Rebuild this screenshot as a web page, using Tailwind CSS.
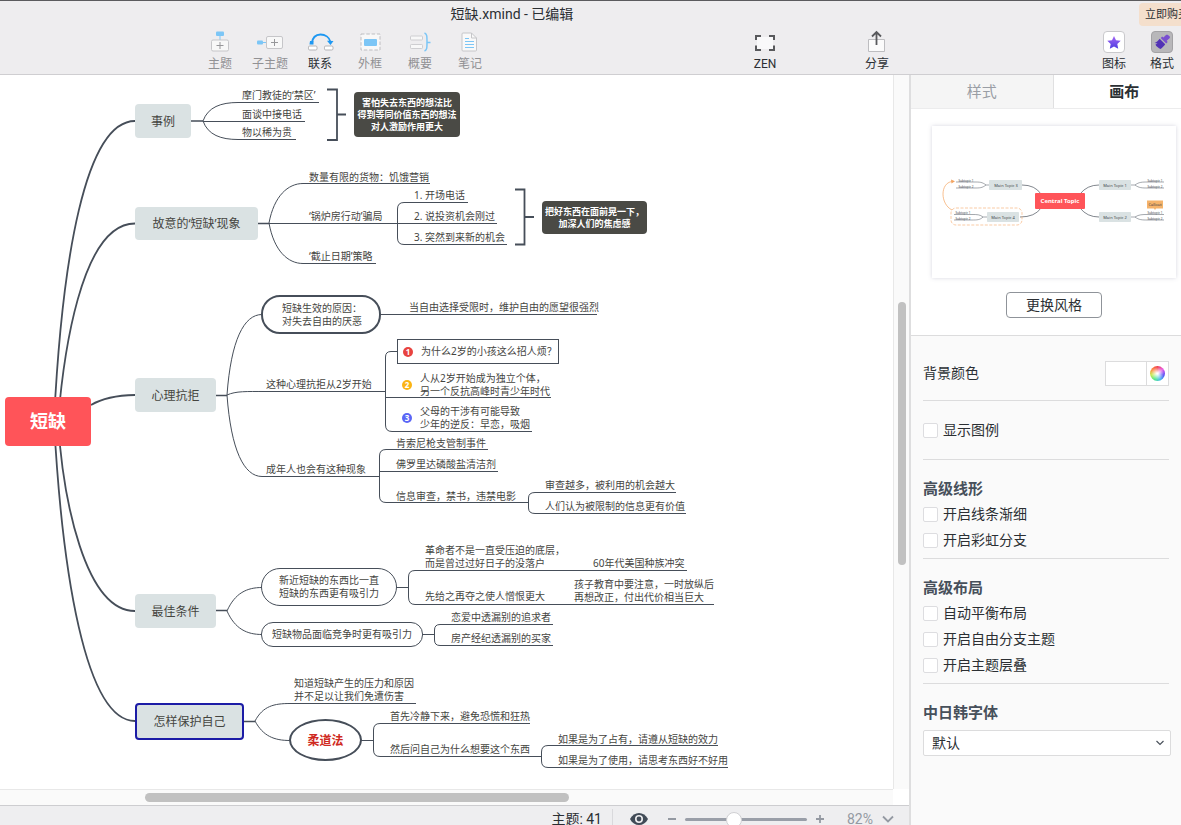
<!DOCTYPE html>
<html lang="zh-CN">
<head>
<meta charset="utf-8">
<meta name="viewport" content="width=device-width, initial-scale=1">
<title>短缺.xmind</title>
<script src="https://cdn.jsdelivr.net/npm/@tailwindcss/browser@4"></script>
</head>
<body class="h-screen flex flex-col overflow-hidden bg-white text-[#2b2f33] font-['Roboto','Noto_Sans_CJK_SC',sans-serif]">

<header class="shrink-0 bg-[#eeedef] border-t border-t-[#5b5b5e] border-b border-b-[#cfced1]">
  <div class="flex h-[27px] overflow-hidden">
    <h1 class="flex-1 pr-[115px] text-center text-[14px] leading-[26px]">短缺.xmind - 已编辑</h1>
    <button class="mt-0.5 -mr-4 h-[23px] w-[58px] shrink-0 rounded bg-[#f4dfcc] pl-1.5 text-left text-[11px] leading-[22px] whitespace-nowrap">立即购买</button>
  </div>
  <nav class="flex h-[46px] pl-[195px] text-[12px] leading-4 overflow-hidden" aria-label="工具栏">
    <button class="flex w-[50px] shrink-0 flex-col items-center text-[#919194]">
      <svg class="h-7 w-7" viewBox="0 0 28 28" fill="none"><rect x="10" y="3.500" width="8" height="4.500" rx="1" fill="#7cc6f6"/><path d="M14 8v4" stroke="#7cc6f6"/><rect x="5.500" y="12" width="17" height="11" rx="1.500" fill="#f8f8f8" stroke="#c6c6c9"/><path d="M10.500 17.500h7M14 14v7" stroke="#97979a"/></svg>
      <span>主题</span>
    </button>
    <button class="flex w-[50px] shrink-0 flex-col items-center text-[#919194]">
      <svg class="h-7 w-7" viewBox="0 0 28 28" fill="none"><rect x="1" y="12.500" width="6" height="4" rx="1" fill="#7cc6f6"/><path d="M7 14.500h3" stroke="#7cc6f6"/><rect x="10.500" y="8.500" width="16" height="12" rx="1.500" fill="#f8f8f8" stroke="#c6c6c9"/><path d="M15 14.500h7M18.500 11v7" stroke="#97979a"/></svg>
      <span>子主题</span>
    </button>
    <button class="flex w-[50px] shrink-0 flex-col items-center">
      <svg class="h-7 w-7" viewBox="0 0 28 28" fill="none"><path d="M5.500 16C6.500 9 10 6.500 14.500 6.500S23.500 9 24.500 14" stroke="#1e98f2" stroke-width="1.800"/><path d="M21 12.800l6.500 .2-3 4z" fill="#1e98f2"/><path d="M4 13h3.500v3.500H3.500z" fill="#1e98f2"/><rect x="2.500" y="18" width="8.500" height="4" rx="1.200" fill="#fff" stroke="#b4b4b7"/><rect x="18.500" y="18" width="8.500" height="4" rx="1.200" fill="#fff" stroke="#b4b4b7"/></svg>
      <span>联系</span>
    </button>
    <button class="flex w-[50px] shrink-0 flex-col items-center text-[#919194]">
      <svg class="h-7 w-7" viewBox="0 0 28 28" fill="none"><rect x="5" y="6" width="19" height="16" fill="#f8f8f8" stroke="#bebec1" stroke-dasharray="3.500 1.800"/><rect x="8" y="11" width="13" height="7" rx="1" fill="#7cc6f6"/></svg>
      <span>外框</span>
    </button>
    <button class="flex w-[50px] shrink-0 flex-col items-center text-[#919194]">
      <svg class="h-7 w-7" viewBox="0 0 28 28" fill="none"><rect x="4.500" y="8" width="12" height="4" rx=".8" fill="#f8f8f8" stroke="#ceced1"/><rect x="4.500" y="16.500" width="12" height="4" rx=".8" fill="#f8f8f8" stroke="#ceced1"/><path d="M18.500 5c2.500 1 2.500 3 2.500 9s0 8-2.500 9M21 14.500h3.500" stroke="#7cc6f6" stroke-width="1.500"/></svg>
      <span>概要</span>
    </button>
    <button class="flex w-[50px] shrink-0 flex-col items-center text-[#919194]">
      <svg class="h-7 w-7" viewBox="0 0 28 28" fill="none"><path d="M7 5h8.500l5 5v12a1 1 0 0 1-1 1H7a1 1 0 0 1-1-1V6a1 1 0 0 1 1-1z" fill="#f9f9f9" stroke="#c6c6c9"/><path d="M15.500 5v5h5" stroke="#c6c6c9"/><path d="M9 10.500h4M9 13.500h9M9 16.500h9M9 19.500h9" stroke="#7cc6f6"/></svg>
      <span>笔记</span>
    </button>
    <button class="ml-[245px] flex w-[50px] shrink-0 flex-col items-center">
      <svg class="h-7 w-7" viewBox="0 0 28 28" fill="none"><rect x="6" y="9" width="16" height="12" fill="#f9f9fa"/><path d="M5 12V8h5M18 8h5v4M23 17.500V22h-5M10 22H5v-4.500" stroke="#58595c" stroke-width="2"/></svg>
      <span>ZEN</span>
    </button>
    <button class="ml-[62px] flex w-[50px] shrink-0 flex-col items-center">
      <svg class="h-7 w-7" viewBox="0 0 28 28" fill="none"><path d="M5.500 11.500h16v12h-16z" fill="#fbfbfb" stroke="#bdbdc0"/><path d="M13.500 17V4M9 8.500L13.500 4 18 8.500" stroke="#58595c" stroke-width="1.800"/></svg>
      <span>分享</span>
    </button>
    <button class="ml-auto flex w-12 shrink-0 flex-col items-center">
      <svg class="h-7 w-7" viewBox="0 0 28 28" fill="none"><defs><linearGradient id="violet" x2="0" y2="1"><stop stop-color="#a667f5"/><stop offset="1" stop-color="#4c3ce0"/></linearGradient></defs><rect x="3.500" y="3.500" width="21" height="21" rx="3.500" fill="#fff" stroke="#c9c9cc"/><path d="M14 8l2 4.200 4.700.6-3.400 3.200.9 4.700-4.200-2.300-4.200 2.300.9-4.700-3.400-3.200 4.700-.6z" fill="url(#violet)"/></svg>
      <span>图标</span>
    </button>
    <button class="-mr-[5px] flex w-12 shrink-0 flex-col items-center">
      <svg class="h-7 w-7" viewBox="0 0 28 28" fill="none"><rect x="3.500" y="3.500" width="21" height="21" rx="3.500" fill="#b8b7ba" stroke="#a3a2a5"/><path d="M21.500 8.200c.7.800.5 1.700-.2 2.300l-2.600 2.200 1 1.200-1.500 1.500-5.500-5.500 1.500-1.500 1.200 1 2.600-2.300c.9-.8 2.600.1 3.500 1.100z" fill="#7a4fd0"/><path d="M11.700 10.700l5.500 5.500c-1.500 2-2.700 3.400-4.700 4.700-1.500-.3-2.300-1-3-1.800-1-.6-1.700-1.400-2-2.500l2-1.200-3-.5c2.300-1 3.700-2.300 5.200-4.200z" fill="#5232b5"/></svg>
      <span>格式</span>
    </button>
  </nav>
</header>

<div class="flex min-h-0 flex-1">
  <main class="flex min-w-0 flex-1 flex-col">
    <div class="flex min-h-0 flex-1">
      <section class="relative min-w-0 flex-1 overflow-hidden bg-white font-['Noto_Sans','Noto_Sans_CJK_SC',sans-serif] text-[10px] leading-[13px] text-[#45453f]" aria-label="思维导图">
        <!-- branches, underlines and brackets -->
        <svg class="absolute left-0 top-0 h-[715px] w-[893px]" viewBox="0 75 893 715" fill="none" stroke="#464e59">
          <g stroke-width="1.800">
            <path d="M54 421C62 260 85 121 135 121"/>
            <path d="M58 421C63 360 80 223.500 135 223.500"/>
            <path d="M91 405Q107 395.500 135 395"/>
            <path d="M58 421C63 500 85 611 135 611"/>
            <path d="M54 421C62 570 85 721 135 721"/>
            <path d="M327 89.500H337V140H327M337 114.500H346"/>
            <path d="M515 189.500H524.500V244.500H515M524.500 217H534"/>
          </g>
          <path d="M191 121H203M258 223.500H269M216 395.500H227M216 610.500H227M243 721.500H255" stroke-width="1.400"/>
          <path d="M203 121C208 107 221 102.500 238 102.500H319M203 121.500H305M203 121C208 135 221 139.500 238 139.500H296"/>
          <path d="M269 223C274 196 288 183.500 303 183.500H430M269 223.500H497M269 223C274 251 288 263.500 303 263.500H376"/>
          <path d="M468 202.500H404Q397.500 202.500 397.500 209V238Q397.500 244.500 404 244.500H507"/>
          <path d="M227 395C231 340 244 314.500 262 314.500M227 395C236 391 246 391.500 266 391.500H385M227 395C231 450 244 476.500 262 476.500H380"/>
          <path d="M381 314.500H597"/>
          <path d="M397 351.500H391Q385.500 351.500 385.500 357V425Q385.500 431.500 392 431.500H532M385 397.500H551"/>
          <path d="M488 449.500H386Q379.500 449.500 379.500 456V496Q379.500 502.500 386 502.500H528M380 471.500H498"/>
          <path d="M676 492.500H535Q528.500 492.500 528.500 498V508Q528.500 513.500 535 513.500H686"/>
          <path d="M227 611C235 593 247 587.500 262 587.500M227 611C235 629 247 634.500 262 634.500"/>
          <path d="M396 587.500H408M687 570.500H415Q408.500 570.500 408.500 577V597Q408.500 604.500 415 604.500H714"/>
          <path d="M422 634.500H434M553 624.500H440Q434.500 624.500 434.500 630V640Q434.500 645.500 440 645.500H553"/>
          <path d="M255 721C263 706 274 703.500 290 703.500H416M255 721C263 736 274 740.500 290 740.500"/>
          <path d="M361 740.500H373M530 723.500H380Q373.500 723.500 373.500 730V750Q373.500 756.500 380 756.500H541"/>
          <path d="M718 745.500H548Q541.500 745.500 541.500 752V761Q541.500 767.500 548 767.500H728"/>
        </svg>

        <div class="absolute left-[5px] top-[322px] flex h-[49px] w-[86px] items-center justify-center rounded bg-[#ff5459] text-[18px] font-bold text-white">短缺</div>

        <div class="absolute left-[135px] top-[29px] flex h-[34px] w-[56px] items-center justify-center rounded bg-[#dae2e3] text-[12px]">事例</div>
        <p class="absolute left-[242px] top-[14px] whitespace-nowrap">摩门教徒的‘禁区’</p>
        <p class="absolute left-[242px] top-[33px] whitespace-nowrap">面谈中接电话</p>
        <p class="absolute left-[242px] top-[51px] whitespace-nowrap">物以稀为贵</p>
        <div class="absolute left-[354px] top-[17px] flex h-[45px] w-[106px] items-center justify-center rounded bg-[#4a4a45] text-center text-[9px] leading-3 font-bold whitespace-nowrap text-white">害怕失去东西的想法比<br>得到等同价值东西的想法<br>对人激励作用更大</div>

        <div class="absolute left-[135px] top-[132px] flex h-[33px] w-[123px] items-center justify-center rounded bg-[#dae2e3] text-[12px]">故意的‘短缺’现象</div>
        <p class="absolute left-[309px] top-[96px] whitespace-nowrap">数量有限的货物：饥饿营销</p>
        <p class="absolute left-[309px] top-[135px] whitespace-nowrap">‘锅炉房行动’骗局</p>
        <p class="absolute left-[309px] top-[175px] whitespace-nowrap">‘截止日期’策略</p>
        <p class="absolute left-[414px] top-[114px] whitespace-nowrap">1. 开场电话</p>
        <p class="absolute left-[414px] top-[135px] whitespace-nowrap">2. 说投资机会刚过</p>
        <p class="absolute left-[414px] top-[156px] whitespace-nowrap">3. 突然到来新的机会</p>
        <div class="absolute left-[542px] top-[126px] flex h-[33px] w-[105px] items-center justify-center rounded bg-[#4a4a45] text-center text-[9px] leading-3 font-bold whitespace-nowrap text-white">把好东西在面前晃一下，<br>加深人们的焦虑感</div>

        <div class="absolute left-[135px] top-[303px] flex h-[34px] w-[81px] items-center justify-center rounded bg-[#dae2e3] text-[12px]">心理抗拒</div>
        <div class="absolute left-[261px] top-[220px] flex h-[39px] w-[120px] items-center rounded-[19px] border-2 border-[#464e59] bg-white pl-[19px] whitespace-nowrap">短缺生效的原因：<br>对失去自由的厌恶</div>
        <p class="absolute left-[409px] top-[226px] whitespace-nowrap">当自由选择受限时，维护自由的愿望很强烈</p>
        <p class="absolute left-[266px] top-[303px] whitespace-nowrap">这种心理抗拒从2岁开始</p>
        <div class="absolute left-[397px] top-[264px] flex h-[25px] w-[162px] items-center gap-2 border border-[#464e59] bg-white pl-[5px] whitespace-nowrap"><b class="flex size-2.5 items-center justify-center rounded-full bg-[#e8433f] text-[8px] leading-none text-white">1</b>为什么2岁的小孩这么招人烦？</div>
        <div class="absolute left-[402px] top-[297px] flex items-center gap-2 whitespace-nowrap"><b class="flex size-2.5 items-center justify-center rounded-full bg-[#fbb414] text-[8px] leading-none text-white">2</b><p>人从2岁开始成为独立个体，<br>另一个反抗高峰时青少年时代</p></div>
        <div class="absolute left-[402px] top-[330px] flex items-center gap-2 whitespace-nowrap"><b class="flex size-2.5 items-center justify-center rounded-full bg-[#5b66f6] text-[8px] leading-none text-white">3</b><p>父母的干涉有可能导致<br>少年的逆反：早恋，吸烟</p></div>
        <p class="absolute left-[266px] top-[388px] whitespace-nowrap">成年人也会有这种现象</p>
        <p class="absolute left-[396px] top-[362px] whitespace-nowrap">肯索尼枪支管制事件</p>
        <p class="absolute left-[396px] top-[383px] whitespace-nowrap">佛罗里达磷酸盐清洁剂</p>
        <p class="absolute left-[396px] top-[415px] whitespace-nowrap">信息审查，禁书，违禁电影</p>
        <p class="absolute left-[545px] top-[404px] whitespace-nowrap">审查越多，被利用的机会越大</p>
        <p class="absolute left-[545px] top-[425px] whitespace-nowrap">人们认为被限制的信息更有价值</p>

        <div class="absolute left-[135px] top-[519px] flex h-[34px] w-[81px] items-center justify-center rounded bg-[#dae2e3] text-[12px]">最佳条件</div>
        <div class="absolute left-[261px] top-[493px] flex h-[38px] w-[136px] items-center justify-center rounded-[19px] border border-[#464e59] bg-white whitespace-nowrap">新近短缺的东西比一直<br>短缺的东西更有吸引力</div>
        <div class="absolute left-[261px] top-[547px] flex h-[25px] w-[162px] items-center justify-center rounded-[12px] border border-[#464e59] bg-white whitespace-nowrap">短缺物品面临竞争时更有吸引力</div>
        <p class="absolute left-[425px] top-[469px] whitespace-nowrap">革命者不是一直受压迫的底层，<br>而是曾过过好日子的没落户</p>
        <p class="absolute left-[593px] top-[482px] whitespace-nowrap">60年代美国种族冲突</p>
        <p class="absolute left-[425px] top-[515px] whitespace-nowrap">先给之再夺之使人憎恨更大</p>
        <p class="absolute left-[574px] top-[503px] whitespace-nowrap">孩子教育中要注意，一时放纵后<br>再想改正，付出代价相当巨大</p>
        <p class="absolute left-[451px] top-[536px] whitespace-nowrap">恋爱中透漏别的追求者</p>
        <p class="absolute left-[451px] top-[557px] whitespace-nowrap">房产经纪透漏别的买家</p>

        <div class="absolute left-[135px] top-[628px] flex h-[37px] w-[109px] items-center justify-center rounded border-2 border-[#1c1ca6] bg-[#dae2e3] text-[12px]">怎样保护自己</div>
        <p class="absolute left-[294px] top-[602px] whitespace-nowrap">知道短缺产生的压力和原因<br>并不足以让我们免遭伤害</p>
        <div class="absolute left-[289px] top-[644px] flex h-[42px] w-[73px] items-center justify-center rounded-[50%] border-2 border-[#464e59] bg-white text-[12px] font-bold text-[#cf2a22]">柔道法</div>
        <p class="absolute left-[390px] top-[635px] whitespace-nowrap">首先冷静下来，避免恐慌和狂热</p>
        <p class="absolute left-[390px] top-[668px] whitespace-nowrap">然后问自己为什么想要这个东西</p>
        <p class="absolute left-[558px] top-[658px] whitespace-nowrap">如果是为了占有，请遵从短缺的效力</p>
        <p class="absolute left-[558px] top-[679px] whitespace-nowrap">如果是为了使用，请思考东西好不好用</p>
      </section>
      <div class="w-4 shrink-0 border-l border-[#e8e8e8] bg-[#fafafa] pl-1 pt-[227px]"><div class="h-[263px] w-2 rounded-full bg-[#c1c1c1]"></div></div>
    </div>
    <div class="mr-4 h-4 shrink-0 border-t border-[#e8e8e8] bg-[#fafafa] pl-[145px] pt-[3px]"><div class="h-[9px] w-[424px] rounded-full bg-[#c1c1c1]"></div></div>
    <footer class="h-5 shrink-0 overflow-hidden border-t border-[#cdcdd0] bg-[#eeeef0]">
      <div class="flex h-[26px] items-center justify-end pr-[15px] text-[14px]">
        <span>主题: 41</span>
        <i class="ml-[10px] h-5 w-px bg-[#d9d9dc]"></i>
        <button class="ml-[17px]" aria-label="预览"><svg class="h-3 w-[18px]" viewBox="0 0 18 12"><path d="M0 6C2 2 5.500 0 9 0s7 2 9 6c-2 4-5.500 6-9 6S2 10 0 6z" fill="#414b57"/><circle cx="9" cy="6" r="4" fill="#eeeef0"/><circle cx="9" cy="6" r="2.400" fill="#414b57"/></svg></button>
        <button class="ml-[19px]" aria-label="缩小"><svg class="h-3 w-[10px]" viewBox="0 0 10 12"><path d="M1 6h8" stroke="#9499a2" stroke-width="2"/></svg></button>
        <input type="range" aria-label="缩放" min="0" max="100" value="39" class="ml-2 h-4 w-[122px] appearance-none bg-transparent [&::-webkit-slider-runnable-track]:h-[3px] [&::-webkit-slider-runnable-track]:rounded [&::-webkit-slider-runnable-track]:bg-[#999ea8] [&::-webkit-slider-thumb]:-mt-[6px] [&::-webkit-slider-thumb]:size-4 [&::-webkit-slider-thumb]:appearance-none [&::-webkit-slider-thumb]:rounded-full [&::-webkit-slider-thumb]:border [&::-webkit-slider-thumb]:border-[#d0d0d3] [&::-webkit-slider-thumb]:bg-white">
        <button class="ml-2" aria-label="放大"><svg class="h-3 w-[10px]" viewBox="0 0 10 12"><path d="M1 6h8M5 2v8" stroke="#9499a2" stroke-width="1.800"/></svg></button>
        <button class="ml-[22px] flex items-center gap-[9px] text-[#9499a2]">82%<svg class="h-2 w-3" viewBox="0 0 12 8" fill="none"><path d="M1 1.500l5 5 5-5" stroke="#9499a2" stroke-width="1.800"/></svg></button>
      </div>
    </footer>
  </main>

  <aside class="w-[272px] shrink-0 overflow-hidden border-l-2 border-[#dededf] bg-[#fafafa] text-[14px]">
    <div class="flex h-[34px] w-[284px] border-b border-[#ececed] text-[15px]" role="tablist">
      <button role="tab" aria-selected="false" class="flex-1 border-r border-[#e0e0e1] bg-[#f5f5f5] pt-0.5 text-[#9a9ea5]">样式</button>
      <button role="tab" aria-selected="true" class="flex-1 bg-white pt-0.5 font-bold">画布</button>
    </div>
    <div class="w-[286px] border-b border-[#dcdcdd] bg-white pb-[17px] pt-[17px]">
      <svg class="mx-auto h-[152px] w-[244px] bg-white shadow-[0_0_4px_rgba(90,90,130,0.25)]" viewBox="0 0 244 152" fill="none" stroke="#4b525c" stroke-width=".7">
        <path d="M109 68Q103 59 90 59M109 82Q103 91 88 91M148 68Q155 59 167 59M148 82Q155 91 167 91"/>
        <path d="M57 59h-3C50 56 48 56 42 56H24M54 59C50 62 48 62 42 62H24M55 91h-4C48 88.500 45 88.500 40 88.500H22M51 91C48 94 45 94 40 94H22M199 59h4C207 56 210 56 216 56h16M203 59C207 62 210 62 216 62h16M199 91h4C207 88.500 210 88.500 216 88.500h16M203 91C207 94 210 94 216 94h16" stroke-width=".5"/>
        <rect x="19" y="82" width="71" height="17" rx="5" stroke="#f6b57e" stroke-dasharray="3 1.500"/>
        <path d="M20 84C8 78 8 57 20 55.500" stroke="#f3a35f"/><path d="M19 53.500l4 1.800-3.500 2.200z" fill="#f3a35f" stroke="none"/>
        <g stroke="none" fill="#dae2e3"><rect x="57" y="54" width="33" height="10" rx=".8"/><rect x="55" y="86" width="32" height="10" rx=".8"/><rect x="167" y="54" width="32" height="10" rx=".8"/><rect x="167" y="86" width="32" height="10" rx=".8"/></g>
        <rect x="103" y="67" width="50" height="16" rx="1" fill="#ff5459" stroke="none"/>
        <path d="M215 74.500h16v8h-7l-1 1.500-1-1.500h-7z" fill="#f5b36b" stroke="none"/>
        <g stroke="none" fill="#3c4248" class="font-['Noto_Sans',sans-serif]" text-anchor="middle">
          <text x="128" y="77" fill="#fff" class="text-[6px] font-bold">Central Topic</text>
          <text x="74" y="60.500" class="text-[4px]">Main Topic 3</text><text x="71" y="92.500" class="text-[4px]">Main Topic 4</text><text x="183" y="60.500" class="text-[4px]">Main Topic 1</text><text x="183" y="92.500" class="text-[4px]">Main Topic 2</text>
          <text x="34" y="55.500" class="text-[3px]">Subtopic 1</text><text x="34" y="61.500" class="text-[3px]">Subtopic 2</text><text x="31" y="88" class="text-[3px]">Subtopic 1</text><text x="31" y="93.500" class="text-[3px]">Subtopic 2</text>
          <text x="223" y="55.500" class="text-[3px]">Subtopic 1</text><text x="223" y="61.500" class="text-[3px]">Subtopic 2</text><text x="223" y="88" class="text-[3px]">Subtopic 1</text><text x="223" y="93.500" class="text-[3px]">Subtopic 2</text><text x="223" y="80" class="text-[4px]">Callout</text>
        </g>
      </svg>
      <button class="mx-auto mt-[14px] block h-[26px] w-24 rounded border border-[#8f9399] bg-white text-[14px] leading-6">更换风格</button>
    </div>
    <div class="px-3">
      <div class="flex h-[65px] items-center justify-between border-b border-[#dcdcdd] pt-[10px]">
        <label for="bg-colour">背景颜色</label>
        <button id="bg-colour" class="flex h-[25px] w-16 border border-[#dcdcdd] bg-white"><span class="h-full flex-1 border-r border-[#dcdcdd]"></span><span class="m-[3px] mt-1 size-[15px] rounded-full bg-[radial-gradient(circle,#fff_5%,transparent_62%),conic-gradient(#f0404e,#e85be8,#5a4cf5,#46b8f0,#4fe88a,#c8e850,#ff8a40,#f0404e)]"></span></button>
      </div>
      <div class="flex h-[59px] items-center border-b border-[#dcdcdd]">
        <label class="flex items-center gap-[5px]"><input type="checkbox" class="size-[15px] appearance-none rounded-xs border border-[#dddde0] bg-white">显示图例</label>
      </div>
      <div class="border-b border-[#dcdcdd] pb-[5px] pt-5">
        <h2 class="mb-[3px] text-[15px] leading-[18px] font-bold text-[#47505b]">高级线形</h2>
        <label class="flex h-[26px] items-center gap-[5px]"><input type="checkbox" class="size-[15px] appearance-none rounded-xs border border-[#dddde0] bg-white">开启线条渐细</label>
        <label class="flex h-[26px] items-center gap-[5px]"><input type="checkbox" class="size-[15px] appearance-none rounded-xs border border-[#dddde0] bg-white">开启彩虹分支</label>
      </div>
      <div class="border-b border-[#dcdcdd] pb-[5px] pt-5">
        <h2 class="mb-[3px] text-[15px] leading-[18px] font-bold text-[#47505b]">高级布局</h2>
        <label class="flex h-[26px] items-center gap-[5px]"><input type="checkbox" class="size-[15px] appearance-none rounded-xs border border-[#dddde0] bg-white">自动平衡布局</label>
        <label class="flex h-[26px] items-center gap-[5px]"><input type="checkbox" class="size-[15px] appearance-none rounded-xs border border-[#dddde0] bg-white">开启自由分支主题</label>
        <label class="flex h-[26px] items-center gap-[5px]"><input type="checkbox" class="size-[15px] appearance-none rounded-xs border border-[#dddde0] bg-white">开启主题层叠</label>
      </div>
      <div class="-mr-0.5 pt-5">
        <label for="cjk-font" class="mb-2 block text-[15px] leading-[18px] font-bold text-[#47505b]">中日韩字体</label>
        <div class="relative">
          <select id="cjk-font" class="h-[26px] w-full appearance-none rounded-xs border border-[#dcdcdd] bg-white px-2 text-[14px] leading-6"><option>默认</option></select>
          <svg class="pointer-events-none absolute right-[7px] top-[10px] h-[6px] w-2" viewBox="0 0 8 6" fill="none"><path d="M.5 1L4 4.500 7.500 1" stroke="#4b525c" stroke-width="1.200"/></svg>
        </div>
      </div>
    </div>
  </aside>
</div>
</body>
</html>
